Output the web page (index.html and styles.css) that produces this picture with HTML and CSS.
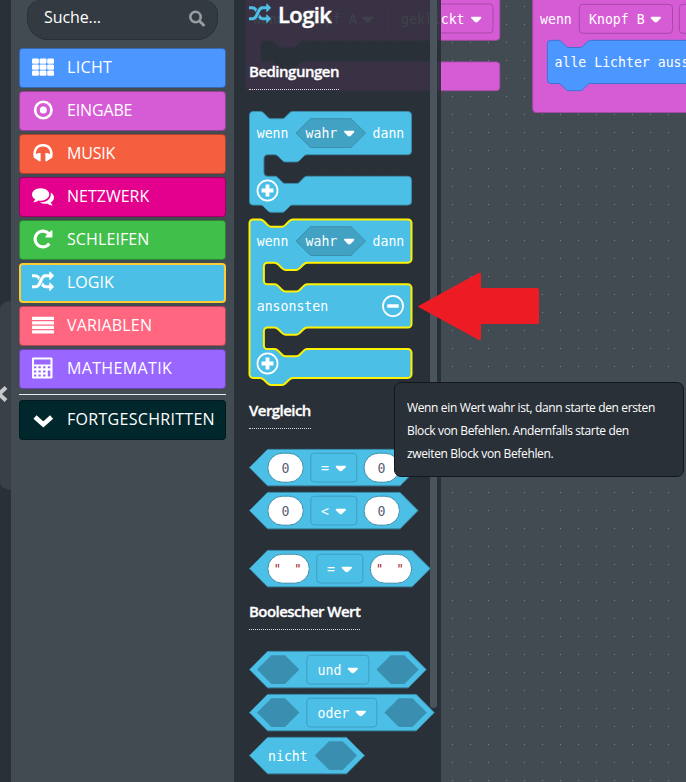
FILE: index.html
```html
<!DOCTYPE html>
<html lang="de">
<head>
<meta charset="utf-8">
<title>Blockeditor</title>
<link rel="stylesheet" href="styles.css">
</head>
<body>
<svg class="defs" width="0" height="0" aria-hidden="true">
  <symbol id="shuffle" viewBox="0 0 1792 1792"><path d="M666 481q-60 92-137 273-22-45-37-72.500t-40.500-63.500-51-56.500-63-35-81.500-14.500h-224q-14 0-23-9t-9-23v-192q0-14 9-23t23-9h224q250 0 410 225zm1126 799q0 14-9 23l-320 320q-9 9-23 9-13 0-22.500-9.500t-9.500-22.500v-192q-32 0-85 .5t-81 1-73-1-71-5-64-10.500-63-18.500-58-28.500-59-40-55-53.500-56-69.500q59-93 136-273 22 45 37 72.500t40.500 63.500 51 56.500 63 35 81.500 14.500h256v-192q0-14 9-23t23-9q12 0 24 10l319 319q9 9 9 23zm0-896q0 14-9 23l-320 320q-9 9-23 9-13 0-22.500-9.500t-9.500-22.500v-192h-256q-48 0-87 15t-69 45-51 61.500-45 77.500q-32 62-78 171-29 66-49.500 111t-54 105-64 100-74 83-90 68.500-106.500 42-128 16.500h-224q-14 0-23-9t-9-23v-192q0-14 9-23t23-9h224q48 0 87-15t69-45 51-61.500 45-77.500q32-62 78-171 29-66 49.500-111t54-105 64-100 74-83 90-68.500 106.500-42 128-16.500h256v-192q0-14 9-23t23-9q12 0 24 10l319 319q9 9 9 23z"/></symbol>
  <symbol id="caret" viewBox="0 0 12 7"><path d="M1.600 0H10.400C12 0 12.300 1.300 11.400 2.300L7.500 6.200C6.600 7 5.400 7 4.500 6.200L.6 2.300C-.3 1.300 0 0 1.600 0Z"/></symbol>
  <symbol id="plus" viewBox="0 0 24 24"><circle cx="12" cy="12" r="10.500" fill="none" stroke="#fff" stroke-width="1.800"/><path d="M10 5.800h4v4.200h4.200v4h-4.200v4.200h-4v-4.200h-4.200v-4h4.200z"/></symbol>
  <symbol id="minus" viewBox="0 0 24 24"><circle cx="12" cy="12" r="10.500" fill="none" stroke="#fff" stroke-width="1.800"/><rect x="6" y="10.200" width="12" height="3.600" rx=".5"/></symbol>
</svg>

<div class="editor">
  <aside class="edge"><div class="collapse"><svg width="11" height="18" viewBox="0 0 11 18"><path d="M6 2.500L-1 9L6 15.500" fill="none" stroke="#c5c8ca" stroke-width="4"/></svg></div></aside>

  <nav class="toolbox">
    <div class="search"><span>Suche...</span>
      <svg width="17" height="17" viewBox="0 0 17 17" fill="none" stroke="#989da1"><circle cx="7.500" cy="7" r="5.200" stroke-width="2.600"/><path d="M11.500 11l4 4" stroke-width="3" stroke-linecap="round"/></svg>
    </div>
    <ul class="categories">
      <li class="cat light"><svg viewBox="0 0 22 22"><g id="cells"><rect y="2.500" width="6.900" height="5.200" rx="1.300"/><rect x="7.600" y="2.500" width="6.900" height="5.200" rx="1.300"/><rect x="15.200" y="2.500" width="6.900" height="5.200" rx="1.300"/></g><use href="#cells" y="6"/><use href="#cells" y="12"/></svg><span>LICHT</span></li>
      <li class="cat input"><svg viewBox="0 0 22 22"><circle cx="11.300" cy="11" r="8.200" fill="none" stroke="#fff" stroke-width="2.600"/><circle cx="11.300" cy="11" r="3.500"/></svg><span>EINGABE</span></li>
      <li class="cat music"><svg viewBox="0 0 22 22"><path d="M3.200 16C1.200 8.500 4.500 3.200 11 3.200S20.800 8.500 18.800 16" fill="none" stroke="#fff" stroke-width="2.500"/><path d="M8.600 11v8.200H7.200L1.800 15.500l1-3.200L7.200 11zM13.400 11v8.200h1.400l5.400-3.700-1-3.200L14.800 11z"/></svg><span>MUSIK</span></li>
      <li class="cat network"><svg viewBox="0 0 1792 1792"><path d="M1408 768q0 139-94 257t-256.500 186.500-353.500 68.500q-86 0-176-16-124 88-278 128-36 9-86 16h-3q-11 0-20.500-8t-11.500-21q-1-3-1-6.500t.5-6.500 2-6l2.500-5 3.500-5.500 4-5 4.500-5 4-4.500q5-6 23-25t26-29.500 22.500-29 25-38.500 20.500-44q-124-72-195-177t-71-224q0-139 94-257t256.500-186.500 353.500-68.500 353.500 68.500 256.500 186.500 94 257zm384 256q0 120-71 224.500t-195 176.500q10 24 20.500 44t25 38.500 22.500 29 26 29.500 23 25q1 1 4 4.500t4.500 5 4 5 3.500 5.500l2.500 5 2 6 .5 6.500-1 6.500q-3 14-13 22t-22 7q-50-7-86-16-154-40-278-128-90 16-176 16-271 0-472-132 58 4 88 4 161 0 309-45t264-129q125-92 192-212t67-254q0-77-23-152 129 71 204 178t75 230z"/></svg><span>NETZWERK</span></li>
      <li class="cat loops"><svg viewBox="0 0 1792 1792"><path d="M1664 256v448q0 26-19 45t-45 19h-448q-42 0-59-40-17-39 14-69l138-138q-148-137-349-137-104 0-198.500 40.500t-163.500 109.500-109.500 163.500-40.500 198.500 40.500 198.500 109.500 163.500 163.500 109.500 198.500 40.500q119 0 225-52t179-147q7-10 23-12 15 0 25 9l137 138q9 8 9.500 20.500t-7.500 22.500q-109 132-264 204.500t-327 72.500q-156 0-298-61t-245-164-164-245-61-298 61-298 164-245 245-164 298-61q147 0 284.500 55.500t244.500 156.500l130-129q29-31 70-14 39 17 39 59z"/></svg><span>SCHLEIFEN</span></li>
      <li class="cat logic selected"><svg><use href="#shuffle"/></svg><span>LOGIK</span></li>
      <li class="cat variables"><svg viewBox="0 0 22 22"><rect y="2.700" width="22" height="3.400" rx=".7"/><rect y="7.200" width="22" height="3.400" rx=".7"/><rect y="11.700" width="22" height="3.400" rx=".7"/><rect y="16.200" width="22" height="3.400" rx=".7"/></svg><span>VARIABLEN</span></li>
      <li class="cat math"><svg viewBox="0 0 22 22"><path fill-rule="evenodd" d="M1 .5h18.500q1 0 1 1v19q0 1-1 1H1q-1 0-1-1v-19q0-1 1-1zM2 2.500v5h16.500v-5zM2 9.300v2h2.300v-2zM6.400 9.300v2h2.400v-2zM11.100 9.300v2h2.400v-2zM15.800 9.300v2h2.500v-2zM2 13.400v2h2.300v-2zM6.400 13.400v2h2.400v-2zM11.100 13.400v2h2.400v-2zM15.800 13.400v6.200h2.500v-6.200zM2 17.500v2h2.300v-2zM6.400 17.500v2h2.400v-2zM11.100 17.500v2h2.400v-2z"/></svg><span>MATHEMATIK</span></li>
    </ul>
    <hr class="divider">
    <div class="cat advanced"><svg viewBox="0 0 22 22"><path d="M3 9l8.300 7.500L19.600 9" fill="none" stroke="#fff" stroke-width="4.600"/></svg><span>FORTGESCHRITTEN</span></div>
  </nav>

  <main class="workspace">
    <svg class="canvas" width="451" height="782" viewBox="235 0 451 782">
      <defs><pattern id="grid" x="452" y="6" width="18" height="18" patternUnits="userSpaceOnUse"><rect width="1" height="1" fill="#7a8288"/></pattern></defs>
      <rect x="235" width="451" height="782" fill="url(#grid)"/>
      <g class="purple">
        <path transform="translate(246,-2.900) scale(.9)" d="M0 -20H282V44a4 4 0 0 1-4 4H64c-2 0-3 1-4 2l-4 4c-1 1-2 2-4 2h-12c-2 0-3-1-4-2l-4-4c-1-1-2-2-4-2h-8a4 4 0 0 0-4 4v16a4 4 0 0 0 4 4h8c2 0 3 1 4 2l4 4c1 1 2 2 4 2h12c2 0 3-1 4-2l4-4c1-1 2-2 4-2H278a4 4 0 0 1 4 4v24a4 4 0 0 1-4 4H4a4 4 0 0 1-4-4z"/>
        <rect x="291" y="4" width="93.500" height="29" rx="3.600"/><rect x="392" y="4" width="101" height="29" rx="3.600"/>
        <path d="M532.700-10H700V112.500H536.300a3.600 3.600 0 0 1-3.600-3.600z"/>
        <rect x="579.300" y="4.300" width="93.200" height="29" rx="3.600"/><rect x="679.300" y="4.300" width="93" height="29" rx="3.600"/>
      </g>
      <path class="blue" transform="translate(547.400,40.300) scale(.9)" d="M0 4a4 4 0 0 1 4-4H12c2 0 3 1 4 2l4 4c1 1 2 2 4 2h12c2 0 3-1 4-2l4-4c1-1 2-2 4-2H180V48H48c-2 0-3 1-4 2l-4 4c-1 1-2 2-4 2h-12c-2 0-3-1-4-2l-4-4c-1-1-2-2-4-2H4a4 4 0 0 1-4-4z"/>
      <g class="label">
        <text x="253" y="24">wenn</text><text x="301" y="24">Knopf A</text><text x="401" y="24">geklickt</text>
        <text x="540" y="24">wenn</text><text x="589" y="24">Knopf B</text><text x="554.500" y="67">alle Lichter ausschalten</text>
        <use href="#caret" x="362.500" y="16.500" width="10.500" height="6.200"/><use href="#caret" x="471" y="16.500" width="10.500" height="6.200"/><use href="#caret" x="650.500" y="16.500" width="10.500" height="6.200"/>
      </g>
    </svg>

    <section class="flyout">
      <h1><svg><use href="#shuffle"/></svg><span>Logik</span></h1>
      <h2 class="conditions">Bedingungen</h2>
      <svg class="block if" width="166" height="104" viewBox="-1.500 -1.500 166 104">
        <path class="teal" transform="scale(.9)" d="M0 4a4 4 0 0 1 4-4H12c2 0 3 1 4 2l4 4c1 1 2 2 4 2h12c2 0 3-1 4-2l4-4c1-1 2-2 4-2H176a4 4 0 0 1 4 4V44a4 4 0 0 1-4 4H64c-2 0-3 1-4 2l-4 4c-1 1-2 2-4 2h-12c-2 0-3-1-4-2l-4-4c-1-1-2-2-4-2h-8a4 4 0 0 0-4 4v16a4 4 0 0 0 4 4h8c2 0 3 1 4 2l4 4c1 1 2 2 4 2h12c2 0 3-1 4-2l4-4c1-1 2-2 4-2H176a4 4 0 0 1 4 4v24a4 4 0 0 1-4 4H48c-2 0-3 1-4 2l-4 4c-1 1-2 2-4 2h-12c-2 0-3-1-4-2l-4-4c-1-1-2-2-4-2H4a4 4 0 0 1-4-4z"/>
        <g id="condition"><path class="bool" d="M46.500 21.600L61 7.200H101.500L116 21.600L101.500 36H61Z"/>
        <g class="label"><text x="7.200" y="26.500">wenn</text><text x="56" y="26.500">wahr</text><text x="123" y="26.500">dann</text><use href="#caret" x="94.500" y="19" width="10.500" height="6.200"/></g></g>
        <use class="button" href="#plus" x="6.500" y="67.500" width="23" height="23"/>
      </svg>
      <svg class="block if-else" width="166" height="169" viewBox="-1.500 -1.500 166 169">
        <path class="teal glow" transform="scale(.9)" d="M0 4a4 4 0 0 1 4-4H12c2 0 3 1 4 2l4 4c1 1 2 2 4 2h12c2 0 3-1 4-2l4-4c1-1 2-2 4-2H176a4 4 0 0 1 4 4V44a4 4 0 0 1-4 4H64c-2 0-3 1-4 2l-4 4c-1 1-2 2-4 2h-12c-2 0-3-1-4-2l-4-4c-1-1-2-2-4-2h-8a4 4 0 0 0-4 4v16a4 4 0 0 0 4 4h8c2 0 3 1 4 2l4 4c1 1 2 2 4 2h12c2 0 3-1 4-2l4-4c1-1 2-2 4-2H176a4 4 0 0 1 4 4V116a4 4 0 0 1-4 4H64c-2 0-3 1-4 2l-4 4c-1 1-2 2-4 2h-12c-2 0-3-1-4-2l-4-4c-1-1-2-2-4-2h-8a4 4 0 0 0-4 4v16a4 4 0 0 0 4 4h8c2 0 3 1 4 2l4 4c1 1 2 2 4 2h12c2 0 3-1 4-2l4-4c1-1 2-2 4-2H176a4 4 0 0 1 4 4v24a4 4 0 0 1-4 4H48c-2 0-3 1-4 2l-4 4c-1 1-2 2-4 2h-12c-2 0-3-1-4-2l-4-4c-1-1-2-2-4-2H4a4 4 0 0 1-4-4z"/>
        <use href="#condition"/>
        <text class="label" x="7.200" y="91.500">ansonsten</text>
        <use class="button" href="#minus" x="132" y="75" width="23" height="23"/>
        <use class="button" href="#plus" x="6.500" y="132.500" width="23" height="23"/>
      </svg>

      <h2 class="comparison">Vergleich</h2>
      <svg class="block" width="183" height="39" viewBox="-1.500 -1.400 183 39">
        <g id="number-row"><path class="teal" d="M0 18.200L18 0H150.500L168.500 18.200L150.500 36.400H18Z"/>
        <rect class="value" x="18.300" y="3.800" width="35.500" height="29" rx="14.500"/><rect class="value" x="114.500" y="3.800" width="35.500" height="29" rx="14.500"/>
        <rect class="field" x="61.300" y="3.800" width="46" height="28.800" rx="3.600"/>
        <use class="button" href="#caret" x="86" y="16" width="10.500" height="6.200"/>
        <text class="number" x="32" y="23.300">0</text><text class="number" x="128" y="23.300">0</text></g>
        <text class="label" x="71.500" y="23.300">=</text>
      </svg>
      <svg class="block less" width="183" height="39" viewBox="-1.500 -1.400 183 39">
        <use href="#number-row"/><text class="label" x="71.500" y="23.300">&lt;</text>
      </svg>
      <svg class="block strings" width="183" height="39" viewBox="-1.500 -1.400 183 39">
        <path class="teal" d="M0 18.200L18 0H162.500L180.700 18.200L162.500 36.400H18Z"/>
        <rect class="value" x="18.300" y="3.800" width="41.500" height="29" rx="14.500"/><rect class="value" x="120.700" y="3.800" width="41.500" height="29" rx="14.500"/>
        <rect class="field" x="67.300" y="3.800" width="46" height="28.800" rx="3.600"/><text class="label" x="77.500" y="23.300">=</text>
        <use class="button" href="#caret" x="92" y="16" width="10.500" height="6.200"/>
        <g class="quote"><text x="24.300" y="23">"</text><text x="44.800" y="23">"</text><text x="126.600" y="23">"</text><text x="147" y="23">"</text></g>
      </svg>

      <h2 class="boolean">Boolescher Wert</h2>
      <svg class="block" width="187" height="39" viewBox="-1.500 -1.400 187 39">
        <path class="teal" d="M0 18.200L18 0H158.700L176.700 18.200L158.700 36.400H18Z"/>
        <path id="slot" class="slot" d="M7.500 18.200L21.900 3.800H35.500L49.900 18.200L35.500 32.600H21.900Z"/><use href="#slot" x="119.400"/>
        <rect class="field" x="57.300" y="3.800" width="62" height="28.800" rx="3.600"/><text class="label" x="68" y="23.300">und</text><use class="button" href="#caret" x="98" y="16" width="10.500" height="6.200"/>
      </svg>
      <svg class="block or" width="187" height="39" viewBox="-1.500 -1.400 187 39">
        <path class="teal" d="M0 18.200L18 0H166.700L184.700 18.200L166.700 36.400H18Z"/>
        <use href="#slot"/><use href="#slot" x="127.400"/>
        <rect class="field" x="57.300" y="3.800" width="70" height="28.800" rx="3.600"/><text class="label" x="68" y="23.300">oder</text><use class="button" href="#caret" x="106" y="16" width="10.500" height="6.200"/>
      </svg>
      <svg class="block not" width="187" height="39" viewBox="-1.500 -1.400 187 39">
        <path class="teal" d="M0 18.200L18 0H97L115 18.200L97 36.400H18Z"/>
        <text class="label" x="18.500" y="23.300">nicht</text><use href="#slot" x="57.700"/>
      </svg>
      <div class="scrollbar"></div>
    </section>

    <svg class="pointer" width="124" height="69" viewBox="416 272 124 69"><path fill="#ed1c24" d="M417.500 306.500L478 273.300Q481 272 481 274V288H537Q539 288 539 290V324H481V338Q481 341 478 339.500Z"/></svg>
    <div class="tooltip">Wenn ein Wert wahr ist, dann starte den ersten<br>Block von Befehlen. Andernfalls starte den<br>zweiten Block von Befehlen.</div>
  </main>
</div>
</body>
</html>
```
FILE: styles.css
```css
* { box-sizing: border-box; }
body { margin: 0; background: #434b52; overflow: hidden; font-family: "Open Sans", "Noto Sans", sans-serif; color: #fff; }
.defs { position: absolute; }
.editor { display: flex; width: 686px; height: 782px; overflow: hidden; }

.edge { width: 11px; background: #2a3038; padding-top: 301px; }
.collapse { height: 189px; background: #394047; border-radius: 12px 0 0 12px / 8px 0 0 8px; display: flex; align-items: center; padding-bottom: 4px; }

.toolbox { width: 224px; padding: 0 8px; background: #434b52; border-right: 1px solid #2c3238; }
.search { height: 40px; margin: 0 8px; padding: 0 12px 5px 16px; display: flex; align-items: center; justify-content: space-between; background: #333a41; border: 1px solid #2a3036; border-top: 0; border-radius: 14px 14px 21px 21px; font-size: 16px; letter-spacing: -.1px; }
.search svg { margin-top: 3px; }
.categories { list-style: none; margin: 8px 0 0; padding: 0; display: grid; gap: 3px; }
.cat { height: 40px; display: flex; align-items: center; gap: 13px; padding: 0 0 3px 12px; border: 1px solid rgba(0, 0, 0, .3); border-radius: 4px; font-size: 16px; white-space: nowrap; }
.cat svg { width: 22px; height: 22px; flex: none; fill: #fff; }
.light { background: #4c97ff; letter-spacing: .35px; }
.input { background: #d65cd6; letter-spacing: -.15px; }
.music { background: #f65e40; letter-spacing: -.2px; }
.network { background: #e3008c; }
.loops { background: #40bf4a; letter-spacing: .1px; }
.logic { background: #4cbfe6; }
.variables { background: #ff6680; letter-spacing: .15px; }
.math { background: #9966ff; letter-spacing: .35px; }
.advanced { background: #00272b; letter-spacing: .3px; }
.cat.selected { border: 2px solid #fc3; padding-left: 11px; }
.divider { height: 1px; margin: 5px 0; border: 0; background: #e8e8e8; }

.workspace { position: relative; width: 451px; }
.canvas { display: block; }
.canvas .purple > * { fill: #d65cd6; stroke: #a649a8; stroke-width: 1; }
.canvas .blue { fill: #4c97ff; stroke: #3373cc; stroke-width: 1; }
.label, .number, .quote { font-family: "DejaVu Sans Mono", monospace; font-size: 13.200px; fill: #fff; }
.number { fill: #575e75; }
.quote { fill: #a31515; font-size: 12px; }
.button { fill: #fff; }

.flyout { position: absolute; inset: 0 auto 0 0; width: 206px; padding-left: 13px; background: rgba(40, 46, 53, .9); display: flex; flex-direction: column; align-items: flex-start; overflow: hidden; }
.flyout h1 { display: flex; gap: 7px; align-items: center; height: 28px; margin: 0 0 0 1px; font-size: 22px; font-weight: 600; letter-spacing: -.6px; -webkit-text-stroke: .4px #fff; }
.flyout h1 svg { width: 22px; height: 22px; fill: #4cbfe6; }
.flyout h2 { height: 28px; margin: 0 0 0 1px; font-size: 15px; line-height: 18px; font-weight: 600; letter-spacing: -.55px; white-space: nowrap; border-bottom: 1px dotted #ddd; flex: none; -webkit-text-stroke: .3px #fff; }
.flyout .conditions { margin-top: 34px; letter-spacing: -.5px; }
.flyout .comparison { margin-top: 14px; }
.flyout .boolean { margin-top: 14px; }
.block { flex: none; overflow: visible; }
.if { margin-top: 20px; }
.if-else { margin-top: 4px; }
.comparison + .block { margin-top: 19px; }
.less { margin-top: 4px; }
.strings { margin-top: 19px; }
.boolean + .block { margin-top: 20px; }
.or, .not { margin-top: 4px; }
.teal { fill: #4cbfe6; stroke: #3a8fad; stroke-width: 1; }
.glow { stroke: #fff200; stroke-width: 2.200; }
.bool { fill: #41a2c3; stroke: #3a8fad; stroke-width: 1; }
.field { fill: none; stroke: #3d9fc1; stroke-width: 1; }
.slot { fill: #3a8fb0; }
.value { fill: #fff; stroke: #3a8fad; stroke-width: 1; }
.scrollbar { position: absolute; left: 195px; top: -10px; width: 7px; height: 718px; border-radius: 4px; background: #4a545c; }

.pointer { position: absolute; left: 181px; top: 272px; }
.tooltip { position: absolute; left: 159px; top: 382px; width: 290px; height: 95px; padding: 13px 12px; background: #2a3038; border: 1px solid #14181c; border-radius: 7px; font-size: 12px; line-height: 23px; letter-spacing: -.36px; white-space: nowrap; }
```
